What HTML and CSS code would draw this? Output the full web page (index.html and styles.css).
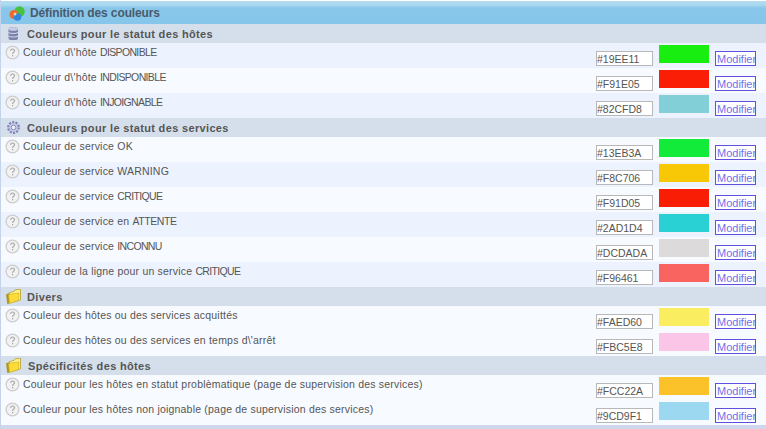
FILE: index.html
```html
<!DOCTYPE html>
<html lang="fr">
<head>
<meta charset="utf-8">
<title>Définition des couleurs</title>
<link rel="stylesheet" href="styles.css">
</head>
<body>
<svg class="defs" width="0" height="0" aria-hidden="true">
  <symbol id="help" viewBox="0 0 15 15">
    <circle cx="7.500" cy="7.500" r="6.400" fill="#f2f2f2" stroke="#cdcdcd" stroke-width="1.300"/>
    <path d="M5.600 5.800c.2-1.200 1-1.800 2-1.800 1.100 0 1.900.7 1.900 1.700 0 1.500-1.900 1.500-1.900 3.200" fill="none" stroke="#a3a3a3" stroke-width="1.100"/>
    <rect x="7" y="10" width="1.200" height="1.300" fill="#a3a3a3"/>
  </symbol>
  <symbol id="folder" viewBox="0 0 15 15">
    <path d="M0.500 5.500 3.500 4.500V14L1.500 14.500Z" fill="#b39a1c" stroke="#8f7a12" stroke-width=".5"/>
    <path d="M3.500 3.500 8 2.500 9 .8 14.500.3V11L3.500 14Z" fill="#fdf08a" stroke="#b59a12" stroke-width=".7"/>
    <path d="M2.500 5.500 13 4 12.300 11.500 3.500 14.500Z" fill="#fddc3a" stroke="#c2a415" stroke-width=".5"/>
  </symbol>
</svg>
<main class="panel">
  <header class="title">
    <svg class="title-icon" viewBox="0 0 16 16" width="16" height="16" aria-hidden="true">
      <circle cx="10.500" cy="6.500" r="5.200" fill="#46c23c"/>
      <circle cx="5" cy="9.500" r="4.500" fill="#ee6a2a"/>
      <circle cx="8.500" cy="12" r="3.800" fill="#2f86dc"/>
      <circle cx="6" cy="9" r="1.500" fill="#f8cfae"/>
    </svg>
    <h1>Définition des couleurs</h1>
  </header>

  <h2 class="section">
    <svg class="section-icon" viewBox="0 0 15 15" width="15" height="15" aria-hidden="true">
      <rect x="2.500" y="1.500" width="9.500" height="12.500" rx="2" fill="#7b83ad"/>
      <ellipse cx="7.250" cy="3" rx="4.750" ry="1.800" fill="#c9cde4"/>
      <path d="M2.500 6.500c2 1.400 7.500 1.400 9.500 0M2.500 10c2 1.400 7.500 1.400 9.500 0" fill="none" stroke="#d8dbec"/>
    </svg>
    Couleurs pour le statut des hôtes
  </h2>
  <div class="row alt">
    <svg class="help"><use href="#help"/></svg><span class="label">Couleur d\'hôte <span class="caps">DISPONIBLE</span></span>
    <input class="hex" value="#19EE11"><span class="swatch c1"></span><button class="mod">Modifier</button>
  </div>
  <div class="row">
    <svg class="help"><use href="#help"/></svg><span class="label">Couleur d\'hôte <span class="caps">INDISPONIBLE</span></span>
    <input class="hex" value="#F91E05"><span class="swatch c2"></span><button class="mod">Modifier</button>
  </div>
  <div class="row alt">
    <svg class="help"><use href="#help"/></svg><span class="label">Couleur d\'hôte <span class="caps">INJOIGNABLE</span></span>
    <input class="hex" value="#82CFD8"><span class="swatch c3"></span><button class="mod">Modifier</button>
  </div>

  <h2 class="section">
    <svg class="section-icon" viewBox="0 0 15 15" width="15" height="15" aria-hidden="true">
      <circle cx="7.500" cy="7.500" r="5.300" fill="#c9cbe6" stroke="#7f83b5" stroke-width="2.200" stroke-dasharray="2 1.300"/>
      <circle cx="7.500" cy="7.500" r="2.300" fill="#eceefa" stroke="#8a8ebd"/>
    </svg>
    Couleurs pour le statut des services
  </h2>
  <div class="row">
    <svg class="help"><use href="#help"/></svg><span class="label">Couleur de service OK</span>
    <input class="hex" value="#13EB3A"><span class="swatch c4"></span><button class="mod">Modifier</button>
  </div>
  <div class="row alt">
    <svg class="help"><use href="#help"/></svg><span class="label">Couleur de service WARNING</span>
    <input class="hex" value="#F8C706"><span class="swatch c5"></span><button class="mod">Modifier</button>
  </div>
  <div class="row">
    <svg class="help"><use href="#help"/></svg><span class="label">Couleur de service <span class="caps">CRITIQUE</span></span>
    <input class="hex" value="#F91D05"><span class="swatch c6"></span><button class="mod">Modifier</button>
  </div>
  <div class="row alt">
    <svg class="help"><use href="#help"/></svg><span class="label">Couleur de service en <span class="caps-soft">ATTENTE</span></span>
    <input class="hex" value="#2AD1D4"><span class="swatch c7"></span><button class="mod">Modifier</button>
  </div>
  <div class="row">
    <svg class="help"><use href="#help"/></svg><span class="label">Couleur de service <span class="caps">INCONNU</span></span>
    <input class="hex" value="#DCDADA"><span class="swatch c8"></span><button class="mod">Modifier</button>
  </div>
  <div class="row alt">
    <svg class="help"><use href="#help"/></svg><span class="label">Couleur de la ligne pour un service <span class="caps">CRITIQUE</span></span>
    <input class="hex" value="#F96461"><span class="swatch c9"></span><button class="mod">Modifier</button>
  </div>

  <h2 class="section">
    <svg class="section-icon tight" width="15" height="15" aria-hidden="true"><use href="#folder"/></svg>
    Divers
  </h2>
  <div class="row">
    <svg class="help"><use href="#help"/></svg><span class="label">Couleur des hôtes ou des services acquittés</span>
    <input class="hex" value="#FAED60"><span class="swatch c10"></span><button class="mod">Modifier</button>
  </div>
  <div class="row">
    <svg class="help"><use href="#help"/></svg><span class="label">Couleur des hôtes ou des services en temps d\'arrêt</span>
    <input class="hex" value="#FBC5E8"><span class="swatch c11"></span><button class="mod">Modifier</button>
  </div>

  <h2 class="section">
    <svg class="section-icon wide" width="15" height="15" aria-hidden="true"><use href="#folder"/></svg>
    Spécificités des hôtes
  </h2>
  <div class="row">
    <svg class="help"><use href="#help"/></svg><span class="label">Couleur pour les hôtes en statut problèmatique (page de supervision des services)</span>
    <input class="hex" value="#FCC22A"><span class="swatch c12"></span><button class="mod">Modifier</button>
  </div>
  <div class="row">
    <svg class="help"><use href="#help"/></svg><span class="label">Couleur pour les hôtes non joignable (page de supervision des services)</span>
    <input class="hex" value="#9CD9F1"><span class="swatch c13"></span><button class="mod">Modifier</button>
  </div>
  <div class="foot"></div>
</main>
</body>
</html>
```
FILE: styles.css
```css
* { box-sizing: border-box; }
html, body { margin: 0; padding: 0; }
body {
  width: 766px;
  height: 429px;
  overflow: hidden;
  background: #fff;
  font-family: "Liberation Sans", Arial, sans-serif;
  color: #555;
}
.defs { position: absolute; }
.panel {
  border-left: 1px solid #c5d3ea;
  display: flex;
  flex-direction: column;
}
.title {
  height: 24px;
  display: flex;
  align-items: center;
  padding: 1px 0 0 8px;
  background: linear-gradient(#fff 0, #fff 1px, #b5dcf0 1px, #a9d8f0 5px, #88c7ea 8px, #86c6ea 100%);
}
.title-icon { flex: none; margin-right: 5px; }
h1 {
  margin: 0;
  font-size: 12px;
  font-weight: bold;
  letter-spacing: -.12px;
  color: #4a5a6a;
}
.section {
  height: 19px;
  margin: 0;
  display: flex;
  align-items: center;
  padding-left: 5px;
  background: #d5dfeb;
  font-size: 11px;
  font-weight: bold;
  color: #555;
  letter-spacing: .34px;
}
.section-icon { flex: none; margin-right: 6px; }
.section-icon.tight { margin-right: 6px; }
.section-icon.wide { margin-right: 7px; }
.row {
  height: 25px;
  display: flex;
  align-items: flex-start;
  background: #f7faff;
}
.row.alt { background: #edf3fe; }
.help { width: 15px; height: 15px; flex: none; margin: 2px 0 0 4px; }
.label {
  flex: 1;
  margin: 3px 0 0 3px;
  font-size: 10.5px;
  line-height: 12px;
  letter-spacing: .2px;
  color: #555;
}
.caps { letter-spacing: -.65px; }
.caps-soft { letter-spacing: -.42px; }
.hex {
  flex: none;
  width: 57px;
  height: 15px;
  margin: 8px 0 0;
  padding: 0;
  border: 1px solid #b8b8b8;
  background: #fff;
  font: 10.5px "Liberation Sans", Arial, sans-serif;
  color: #555;
}
.swatch { width: 50px; height: 18px; margin: 2px 0 0 6px; flex: none; }
.mod {
  flex: none;
  width: 41px;
  height: 15px;
  margin: 8px 10px 0 6px;
  padding: 0 0 0 1px;
  border: 1px solid #5f50e0;
  background: #fff;
  font: 11px "Liberation Sans", Arial, sans-serif;
  text-align: left;
  color: #6f70ea;
  white-space: nowrap;
  overflow: hidden;
}
.c1 { background: #19ee11; }
.c2 { background: #f91e05; }
.c3 { background: #82cfd8; }
.c4 { background: #13eb3a; }
.c5 { background: #f8c706; }
.c6 { background: #f91d05; }
.c7 { background: #2ad1d4; }
.c8 { background: #dcdada; }
.c9 { background: #f96461; }
.c10 { background: #faed60; }
.c11 { background: #fbc5e8; }
.c12 { background: #fcc22a; }
.c13 { background: #9cd9f1; }
.foot { height: 4px; background: #d0d6ec; }
```
